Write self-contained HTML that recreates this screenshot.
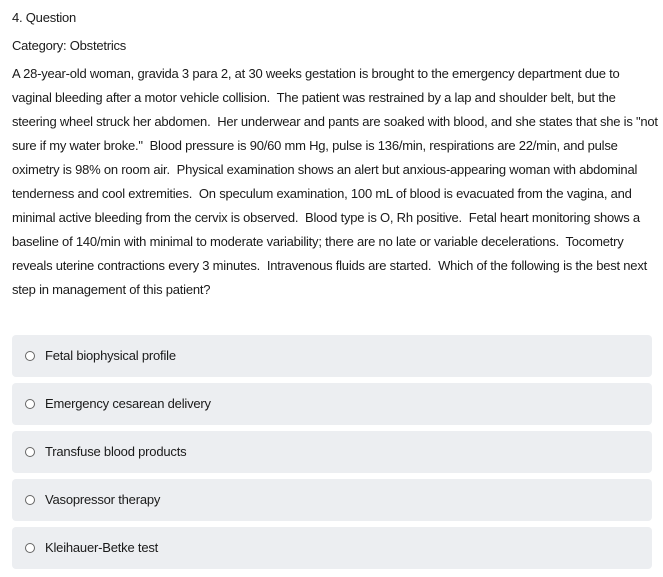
<!DOCTYPE html>
<html><head><meta charset="utf-8"><style>
body{margin:0;background:#fff;font-family:"Liberation Sans",sans-serif;color:#1a1a1a;font-size:13px;}
.l{position:absolute;left:12px;white-space:nowrap;letter-spacing:-0.22px;line-height:16px}
.opt{position:absolute;left:12px;width:640px;height:42px;background:#eceef1;border-radius:4px}
.opt i{position:absolute;left:13px;top:16px;width:8px;height:8px;border:1px solid #666;border-radius:50%;background:#fff}
.opt span{position:absolute;left:33px;top:13px;font-size:13px;letter-spacing:-0.2px;color:#1a1a1a}
</style></head><body>
<div class="l" style="top:10px">4. Question</div>
<div class="l" style="top:38px">Category: Obstetrics</div>
<div class="l" style="top:66px">A 28-year-old woman, gravida 3 para 2, at 30 weeks gestation is brought to the emergency department due to</div>
<div class="l" style="top:90px">vaginal bleeding after a motor vehicle collision.&nbsp; The patient was restrained by a lap and shoulder belt, but the</div>
<div class="l" style="top:114px">steering wheel struck her abdomen.&nbsp; Her underwear and pants are soaked with blood, and she states that she is "not</div>
<div class="l" style="top:138px">sure if my water broke."&nbsp; Blood pressure is 90/60 mm Hg, pulse is 136/min, respirations are 22/min, and pulse</div>
<div class="l" style="top:162px">oximetry is 98% on room air.&nbsp; Physical examination shows an alert but anxious-appearing woman with abdominal</div>
<div class="l" style="top:186px">tenderness and cool extremities.&nbsp; On speculum examination, 100 mL of blood is evacuated from the vagina, and</div>
<div class="l" style="top:210px">minimal active bleeding from the cervix is observed.&nbsp; Blood type is O, Rh positive.&nbsp; Fetal heart monitoring shows a</div>
<div class="l" style="top:234px">baseline of 140/min with minimal to moderate variability; there are no late or variable decelerations.&nbsp; Tocometry</div>
<div class="l" style="top:258px">reveals uterine contractions every 3 minutes.&nbsp; Intravenous fluids are started.&nbsp; Which of the following is the best next</div>
<div class="l" style="top:282px">step in management of this patient?</div>
<div class="opt" style="top:335px"><i></i><span>Fetal biophysical profile</span></div>
<div class="opt" style="top:383px"><i></i><span>Emergency cesarean delivery</span></div>
<div class="opt" style="top:431px"><i></i><span>Transfuse blood products</span></div>
<div class="opt" style="top:479px"><i></i><span>Vasopressor therapy</span></div>
<div class="opt" style="top:527px"><i></i><span>Kleihauer-Betke test</span></div>
</body></html>
